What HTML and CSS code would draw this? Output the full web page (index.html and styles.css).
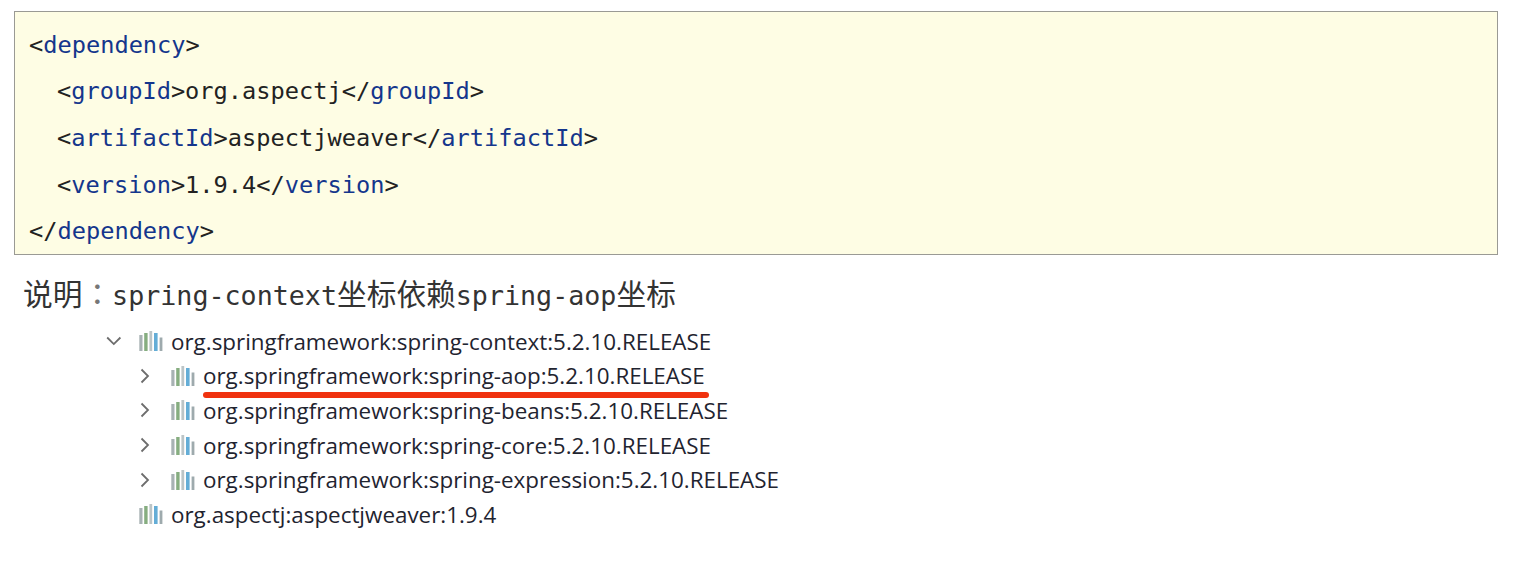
FILE: index.html
```html
<!DOCTYPE html>
<html lang="zh">
<head>
<meta charset="utf-8">
<title>spring-context</title>
<link rel="stylesheet" href="styles.css">
</head>
<body>
<pre class="code"><code><span class="line">&lt;<span class="tag">dependency</span>&gt;</span>
<span class="line indent">&lt;<span class="tag">groupId</span>&gt;org.aspectj&lt;/<span class="tag">groupId</span>&gt;</span>
<span class="line indent">&lt;<span class="tag">artifactId</span>&gt;aspectjweaver&lt;/<span class="tag">artifactId</span>&gt;</span>
<span class="line indent">&lt;<span class="tag">version</span>&gt;1.9.4&lt;/<span class="tag">version</span>&gt;</span>
<span class="line">&lt;/<span class="tag">dependency</span>&gt;</span></code></pre>
<p class="note">说明<span class="punct" lang="zh-Hant">：</span><span class="mono">spring-context</span>坐标依赖<span class="mono">spring-aop</span>坐标</p>
<ul class="tree">
  <li class="node root"><svg class="arrow" viewBox="0 0 16 16"><path d="M2.2 4.5l6.6 6.6 6.6-6.6"/></svg><svg class="lib" viewBox="0 0 24 20"><use href="#lib"/></svg><span>org.springframework:spring-context:5.2.10.RELEASE</span></li>
  <li class="node child mark"><svg class="arrow" viewBox="0 0 16 16"><path d="M4.5 1.5l6.5 6.5-6.5 6.5"/></svg><svg class="lib" viewBox="0 0 24 20"><use href="#lib"/></svg><span>org.springframework:spring-aop:5.2.10.RELEASE</span></li>
  <li class="node child"><svg class="arrow" viewBox="0 0 16 16"><path d="M4.5 1.5l6.5 6.5-6.5 6.5"/></svg><svg class="lib" viewBox="0 0 24 20"><use href="#lib"/></svg><span>org.springframework:spring-beans:5.2.10.RELEASE</span></li>
  <li class="node child"><svg class="arrow" viewBox="0 0 16 16"><path d="M4.5 1.5l6.5 6.5-6.5 6.5"/></svg><svg class="lib" viewBox="0 0 24 20"><use href="#lib"/></svg><span>org.springframework:spring-core:5.2.10.RELEASE</span></li>
  <li class="node child"><svg class="arrow" viewBox="0 0 16 16"><path d="M4.5 1.5l6.5 6.5-6.5 6.5"/></svg><svg class="lib" viewBox="0 0 24 20"><use href="#lib"/></svg><span>org.springframework:spring-expression:5.2.10.RELEASE</span></li>
  <li class="node root leaf"><svg class="lib" viewBox="0 0 24 20"><use href="#lib"/></svg><span>org.aspectj:aspectjweaver:1.9.4</span></li>
</ul>
<svg class="defs" width="0" height="0"><defs><g id="lib">
  <rect x="0.3" y="4" width="3.2" height="16" fill="#a8b2b4"/>
  <rect x="5.2" y="2" width="3.4" height="18" fill="#86ad80"/>
  <rect x="10.4" y="0" width="2.8" height="20" fill="#bcc5c7"/>
  <rect x="15" y="2" width="3.6" height="18" fill="#64add6"/>
  <rect x="20.6" y="6.5" width="2.8" height="13.5" fill="#9eaaad"/>
</g></defs></svg>
</body>
</html>
```
FILE: styles.css
```css
html, body { margin: 0; padding: 0; background: #fff; }
body { width: 1522px; height: 568px; overflow: hidden; }
.code {
  margin: 11px 0 0 14px;
  width: 1484px;
  height: 244px;
  box-sizing: border-box;
  background: #fefde4;
  border: 1px solid #9a9a94;
  padding: 9.5px 14px 0;
  font-family: "DejaVu Sans Mono", monospace;
  font-size: 23.65px;
  color: #222;
}
.code code { font: inherit; display: flex; flex-direction: column; }
.line { display: block; height: 46.7px; line-height: 46.7px; }
.indent { padding-left: 28px; }
.tag { color: #14368c; }
.note {
  margin: 18px 0 0 23px;
  height: 40px;
  line-height: 40px;
  font-family: "Noto Sans CJK SC", sans-serif;
  font-size: 29.7px;
  color: #333;
  white-space: nowrap;
}
.punct { font-family: "Noto Sans CJK TC", sans-serif; color: #777; }
.mono { font-family: "DejaVu Sans Mono", monospace; font-size: 26.7px; }
.tree {
  list-style: none;
  margin: 11px 0 0;
  padding: 0;
  font-family: "Open Sans", sans-serif;
  font-size: 22.4px;
  color: #1f2430;
}
.node { display: flex; align-items: center; height: 34.6px; white-space: nowrap; }
.root { padding-left: 105px; }
.child { padding-left: 137px; }
.leaf { padding-left: 139px; }
.arrow { width: 16px; height: 16px; margin-right: 18px; fill: none; stroke: #6d6d6d; stroke-width: 1.8; overflow: visible; }
.lib { width: 24px; height: 20px; margin-right: 8px; }
.mark { position: relative; }
.mark::after {
  content: "";
  position: absolute;
  left: 203px;
  top: 33px;
  width: 506px;
  height: 6px;
  border-radius: 3px;
  background: #f0320f;
}
.defs { position: absolute; }
```
